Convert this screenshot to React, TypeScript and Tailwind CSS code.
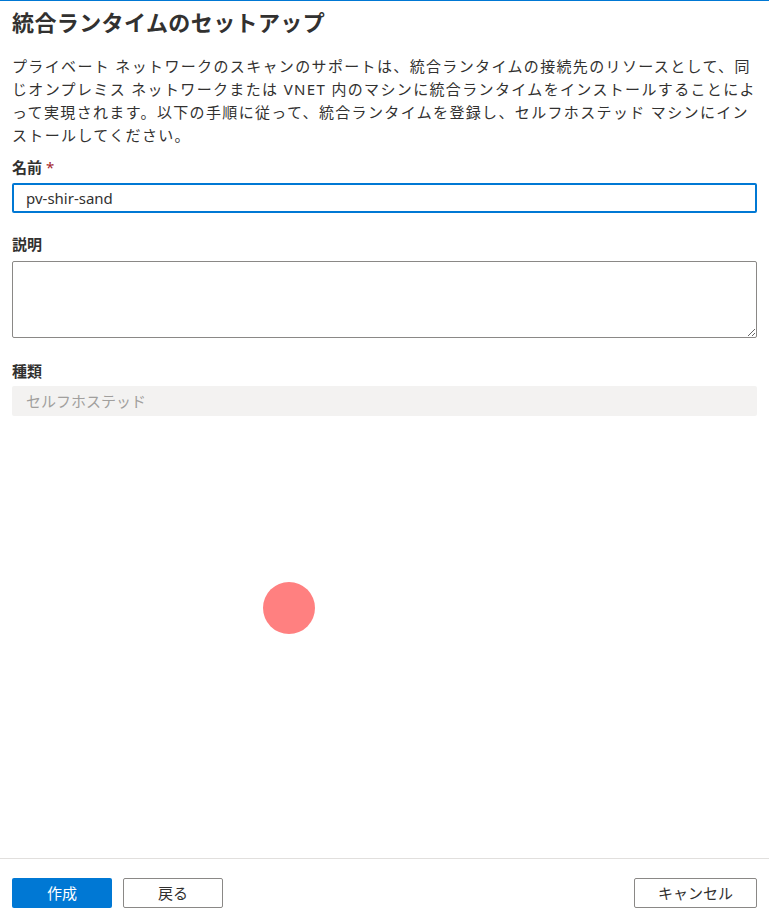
const font = "font-['Noto_Sans','Noto_Sans_CJK_JP',sans-serif]"

const lines = [
  'プライベート ネットワークのスキャンのサポートは、統合ランタイムの接続先のリソースとして、同',
  'じオンプレミス ネットワークまたは VNET 内のマシンに統合ランタイムをインストールすることによ',
  'って実現されます。以下の手順に従って、統合ランタイムを登録し、セルフホステッド マシンにイン',
  'ストールしてください。',
]

export default function App() {
  return (
    <div className={`relative flex h-[923px] flex-col border-t border-[#0078d4] bg-white text-[#323130] ${font}`}>
      <main className="flex-1 px-3">
        <h1 className="pt-[6px] text-[22px] font-semibold leading-[30px] tracking-[0.4px]">統合ランタイムのセットアップ</h1>

        <div className="mt-[18px] text-[15px] leading-[23px] tracking-[1.35px]">
          {lines.map((line, i) => (
            <div key={i} className="whitespace-nowrap">
              {line}
            </div>
          ))}
        </div>

        <label className="mt-[10px] block text-[15px] font-bold leading-[20px]">
          名前 <span className="font-normal text-[#a4262c]">*</span>
        </label>
        <input
          defaultValue="pv-shir-sand"
          className="mt-[6px] block h-[30px] w-full rounded-[2px] border-2 border-[#0078d4] pl-[12px] text-[15px] text-[#323130] outline-none"
        />

        <label className="mt-[21px] block text-[15px] font-bold leading-[20px]">説明</label>
        <textarea className="mt-[7px] block h-[77px] w-full rounded-[2px] border border-[#8a8886] outline-none" />

        <label className="mt-[23px] block text-[15px] font-bold leading-[20px]">種類</label>
        <div className="mt-[5px] flex h-[30px] items-center rounded-[2px] bg-[#f3f2f1] pl-[14px] text-[15px] text-[#a19f9d]">
          セルフホステッド
        </div>
      </main>

      <footer className="flex items-center justify-between border-t border-[#e1dfdd] px-3 pb-[15px] pt-[19px]">
        <div className="flex gap-[11px]">
          <button type="button" className="h-[30px] w-[100px] rounded-[2px] bg-[#0078d4] text-[15px] text-white">
            作成
          </button>
          <button type="button" className="h-[30px] w-[100px] rounded-[2px] border border-[#8a8886] bg-white text-[15px]">
            戻る
          </button>
        </div>
        <button type="button" className="h-[30px] w-[123px] rounded-[2px] border border-[#8a8886] bg-white text-[15px]">
          キャンセル
        </button>
      </footer>

      <div className="absolute left-[263px] top-[581px] h-[52px] w-[52px] rounded-full bg-[#ff8080]" />
    </div>
  )
}
